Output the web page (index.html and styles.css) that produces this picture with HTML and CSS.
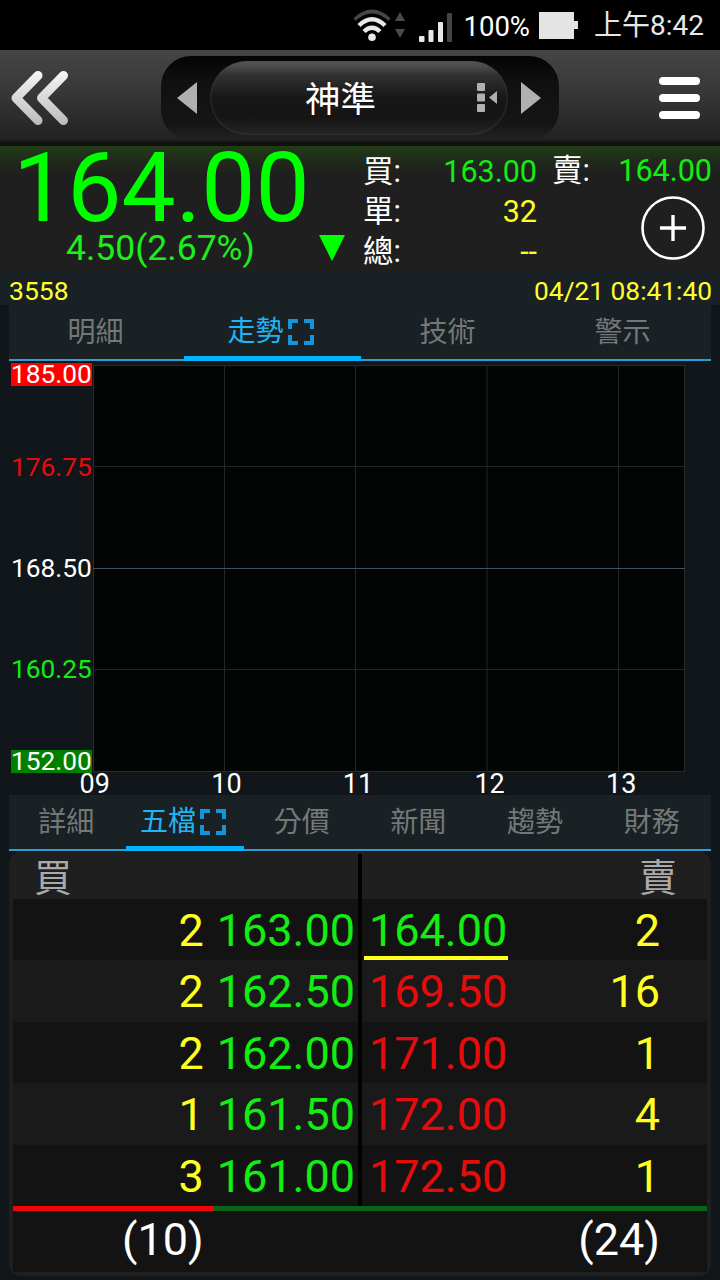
FILE: index.html
```html
<!DOCTYPE html>
<html lang="zh-Hant">
<head>
    <meta charset="UTF-8">
    <meta name="viewport" content="width=device-width, initial-scale=1.0">
    <title>神準 3558</title>
    <link rel="stylesheet" href="styles.css">
</head>
<body>
    <div class="status-bar">
        <svg class="wifi" width="54" height="50" viewBox="0 0 54 50">
            <g fill="none" stroke-linecap="butt">
                <path d="M1.5 19.5 Q19 3.5 36.500 19.500" stroke="#454545" stroke-width="3.600"/>
                <path d="M6 25.500 Q19 13 32 25.500" stroke="#e8e8e8" stroke-width="4.400"/>
                <path d="M11 31.500 Q19 24 27 31.500" stroke="#e8e8e8" stroke-width="4.400"/>
            </g>
            <circle cx="19" cy="37.300" r="3.800" fill="#e8e8e8"/>
            <path d="M42 21 L47 12 L52 21 Z M42 29 H52 L47 38 Z" fill="#4a4a4a"/>
        </svg>
        <svg class="signal" width="34" height="50" viewBox="0 0 34 50">
            <rect x="0" y="36" width="5.500" height="6" rx="1" fill="#e8e8e8"/>
            <rect x="9.500" y="30" width="5" height="12" rx="1" fill="#e8e8e8"/>
            <rect x="19" y="22" width="5" height="20" rx="1" fill="#e8e8e8"/>
            <rect x="28" y="13" width="5" height="29" rx="1" fill="#454545"/>
        </svg>
        <span class="percent">100%</span>
        <svg class="battery" width="39" height="50" viewBox="0 0 39 50">
            <path d="M0 12 H35 V21 H39 V29 H35 V39 H0 Z" fill="#e4e4e4"/>
        </svg>
        <span class="clock">上午8:42</span>
    </div>

    <div class="header">
        <svg class="back" width="62" height="60" viewBox="0 0 62 60">
            <defs>
                <linearGradient id="metal" x1="0" y1="0" x2="0" y2="60" gradientUnits="userSpaceOnUse">
                    <stop offset="0" stop-color="#fafafa"/>
                    <stop offset="1" stop-color="#b8b8b8"/>
                </linearGradient>
            </defs>
            <path d="M30 7.500 L8 30 L30 52.500 M55.500 7.500 L33.500 30 L55.500 52.500" fill="none" stroke="url(#metal)" stroke-width="9" stroke-linecap="round" stroke-linejoin="round"/>
        </svg>
        <div class="selector">
            <svg width="20" height="32" viewBox="0 0 20 32"><path d="M0 16 L20 0 V32 Z" fill="#b0b0b0"/></svg>
            <div class="pill">
                <span class="stock-name">神準</span>
                <svg class="list-icon" width="21" height="30" viewBox="0 0 21 30">
                    <rect width="8" height="8" rx="1" fill="#b0b0b0"/>
                    <rect y="10.500" width="8" height="8" rx="1" fill="#b0b0b0"/>
                    <rect y="21" width="8" height="8" rx="1" fill="#b0b0b0"/>
                    <path d="M12 14.500 L20 8 V21 Z" fill="#b0b0b0"/>
                </svg>
            </div>
            <svg width="20" height="32" viewBox="0 0 20 32"><path d="M0 0 L20 16 L0 32 Z" fill="#b0b0b0"/></svg>
        </div>
        <div class="menu"><i></i><i></i><i></i></div>
    </div>

    <div class="quote">
        <div class="quote-main">
            <div class="price">164.00</div>
            <div class="change">
                <span>4.50(2.67%)</span>
                <svg width="26" height="26" viewBox="0 0 26 26"><path d="M0 0 H26 L13 26 Z" fill="#00ff00"/></svg>
            </div>
        </div>
        <div class="quote-detail">
            <span>買:</span><span class="value green">163.00</span>
            <span>單:</span><span class="value yellow">32</span>
            <span>總:</span><span class="value yellow">--</span>
        </div>
        <div class="quote-ask">
            <div class="ask-line"><span>賣:</span><span class="green">164.00</span></div>
            <svg class="add" width="64" height="64" viewBox="0 0 64 64">
                <circle cx="32" cy="32" r="30.500" fill="none" stroke="#fff" stroke-width="2.600"/>
                <path d="M19 32 H45 M32 19 V45" stroke="#fff" stroke-width="3.400"/>
            </svg>
        </div>
    </div>

    <div class="info">
        <span>3558</span>
        <span class="time">04/21 08:41:40</span>
    </div>

    <div class="tabs">
        <div class="tab">明細</div>
        <div class="tab active">走勢
            <svg width="26" height="26" viewBox="0 0 26 26"><path d="M2 10 V2 H10 M16 2 H24 V10 M24 16 V24 H16 M10 24 H2 V16" fill="none" stroke="#1594d8" stroke-width="4"/></svg>
        </div>
        <div class="tab">技術</div>
        <div class="tab">警示</div>
    </div>

    <div class="chart">
        <div class="scale">
            <span class="limit-up">185.00</span>
            <span class="red">176.75</span>
            <span>168.50</span>
            <span class="green">160.25</span>
            <span class="limit-down">152.00</span>
        </div>
        <svg class="plot" width="592" height="407" viewBox="0 0 592 407">
            <rect x="0.500" y="0.500" width="591" height="406" fill="#030504" stroke="#292b2b"/>
            <path d="M131.500 0 V407 M262.500 0 V407 M394 0 V407 M525.500 0 V407 M0 101.500 H592 M0 304.500 H592" stroke="#252727"/>
            <path d="M0 203.500 H592" stroke="#3f525b"/>
        </svg>
    </div>
    <div class="hours">
        <span>09</span><span>10</span><span>11</span><span>12</span><span>13</span>
    </div>

    <div class="tabs">
        <div class="tab">詳細</div>
        <div class="tab active">五檔
            <svg width="26" height="26" viewBox="0 0 26 26"><path d="M2 10 V2 H10 M16 2 H24 V10 M24 16 V24 H16 M10 24 H2 V16" fill="none" stroke="#1594d8" stroke-width="4"/></svg>
        </div>
        <div class="tab">分價</div>
        <div class="tab">新聞</div>
        <div class="tab">趨勢</div>
        <div class="tab">財務</div>
    </div>

    <div class="depth">
        <div class="depth-head"><span>買</span><span>賣</span></div>
        <div class="depth-body">
            <div class="side bid">
                <div class="row"><span class="qty">2</span><span class="green">163.00</span></div>
                <div class="row"><span class="qty">2</span><span class="green">162.50</span></div>
                <div class="row"><span class="qty">2</span><span class="green">162.00</span></div>
                <div class="row"><span class="qty">1</span><span class="green">161.50</span></div>
                <div class="row"><span class="qty">3</span><span class="green">161.00</span></div>
            </div>
            <div class="side ask">
                <div class="row"><span class="green last">164.00</span><span class="qty">2</span></div>
                <div class="row"><span class="red">169.50</span><span class="qty">16</span></div>
                <div class="row"><span class="red">171.00</span><span class="qty">1</span></div>
                <div class="row"><span class="red">172.00</span><span class="qty">4</span></div>
                <div class="row"><span class="red">172.50</span><span class="qty">1</span></div>
            </div>
        </div>
        <div class="ratio"><div class="ratio-buy" style="width: 29%"></div></div>
        <div class="totals"><span>(10)</span><span>(24)</span></div>
    </div>
</body>
</html>
```
FILE: styles.css
```css
* {
    box-sizing: border-box;
}

body {
    margin: 0;
    width: 720px;
    height: 1280px;
    overflow: hidden;
    background: #10161a;
    color: #fff;
    font-family: Roboto, "Noto Sans CJK TC", sans-serif;
    white-space: nowrap;
}

svg {
    display: block;
    flex: none;
}

.green {
    color: #12ee12;
}

.red {
    color: #e60c0c;
}

.yellow {
    color: #ffff20;
}

/* status bar */
.status-bar {
    display: flex;
    justify-content: flex-end;
    height: 50px;
    padding-right: 16px;
    background: #000;
    color: #e8e8e8;
    font-size: 28px;
    line-height: 52px;
}

.signal {
    margin-left: 12px;
}

.percent {
    margin-left: 10px;
    color: #fff;
    font-size: 27.5px;
    line-height: 54px;
}

.battery {
    margin: 0 16px 0 9px;
}

/* header */
.header {
    display: flex;
    align-items: center;
    justify-content: space-between;
    height: 96px;
    padding: 0 20px 0 8px;
    background: linear-gradient(#454545, #393939 40%, #222 93%, #10100c 97%, #10100c);
}

.selector {
    display: flex;
    align-items: center;
    justify-content: space-between;
    width: 398px;
    height: 84px;
    margin-left: -9px;
    padding: 0 18px 0 16px;
    border-radius: 30px;
    background: linear-gradient(#040404, #101010 30%, #151515 80%, #222);
}

.pill {
    display: flex;
    align-items: center;
    width: 298px;
    height: 74px;
    border-radius: 37px;
    padding: 0 10px 0 95px;
    justify-content: space-between;
    background: linear-gradient(#5a5a5a, #303030 20%, #171717 50%, #151515 75%, #252525);
    box-shadow: inset 0 0 3px #444;
}

.stock-name {
    padding-top: 4px;
    font-size: 35.5px;
    line-height: 74px;
}

.menu {
    display: flex;
    flex-direction: column;
    gap: 9px;
}

.menu i {
    width: 41px;
    height: 8px;
    border-radius: 4px;
    background: #fff;
}

/* quote */
.quote {
    display: flex;
    height: 125px;
    background: linear-gradient(#213c15, #202a1c 12%, #1f1f1f 23%);
}

.quote-main {
    width: 363px;
    color: #00ff00;
}

.price {
    height: 83px;
    padding-left: 13px;
    font-size: 96.5px;
    line-height: 85px;
}

.change {
    display: flex;
    align-items: center;
    justify-content: space-between;
    height: 38px;
    padding: 0 18px 0 66px;
    color: #1cf01c;
    font-size: 35.5px;
    line-height: 38px;
}

.quote-detail {
    display: grid;
    grid-template-columns: 60px 114px;
    grid-template-rows: 40px 40px 40px;
    padding-top: 5px;
    font-size: 30.5px;
    line-height: 41px;
}

.value {
    text-align: right;
}

.quote-ask {
    display: flex;
    flex: 1;
    flex-direction: column;
    padding: 5px 8px 0 15px;
    font-size: 30.5px;
    line-height: 40px;
}

.ask-line {
    display: flex;
    justify-content: space-between;
}

.add {
    align-self: flex-end;
    margin: 5px 7px 0 0;
}

.info {
    display: flex;
    justify-content: space-between;
    height: 34px;
    padding: 0 8px 0 9px;
    background: #1a2124;
    color: #ffff30;
    font-size: 26.5px;
    line-height: 40px;
}

.time {
    font-size: 26.3px;
}

/* tabs */
.tabs {
    display: flex;
    height: 56px;
    margin: 0 9px;
    background: linear-gradient(#2a9fd5, #2a9fd5) bottom / 100% 2px no-repeat #1a2124;
    color: #747878;
    font-size: 28px;
    line-height: 54px;
}

.tab {
    display: flex;
    flex: 1 1 0;
    align-items: center;
    justify-content: center;
    gap: 4px;
    padding: 0 2px 1px 0;
}

.tab.active {
    border-bottom: 5px solid #00b4ff;
    padding: 2px 4px 0 0;
    color: #20b4f5;
}

/* chart */
.chart {
    display: flex;
    height: 412px;
}

.scale {
    display: grid;
    grid-template-rows: 23px 162px 40px 162px 23px;
    align-items: center;
    width: 93px;
    padding: 2px 1px 0 11px;
    font-size: 26.3px;
    line-height: 23px;
}

.limit-up {
    background: #f00;
}

.limit-down {
    background: #008000;
}

.plot {
    margin-top: 4px;
}

.hours {
    display: flex;
    height: 22px;
    padding-left: 29px;
    font-size: 27px;
    line-height: 23px;
}

.hours span {
    width: 131.6px;
    text-align: center;
}

/* five-level depth */
.depth {
    height: 424px;
    margin: 1px 9px 0;
    padding: 0 4px;
    border-radius: 12px;
    background: #1f1f1f;
}

.depth-head {
    display: flex;
    justify-content: space-between;
    height: 47px;
    padding: 0 30px 0 21px;
    background: linear-gradient(#000, #000) 345px 2px / 4px 100% no-repeat;
    color: #aaa;
    font-size: 38px;
    line-height: 53px;
}

.depth-body {
    display: flex;
    gap: 4px;
    height: 307px;
    background: #000;
    font-size: 45px;
    line-height: 63px;
}

.side {
    display: grid;
    flex: 1 1 0;
    grid-template-rows: repeat(5, 61.4px);
}

.row {
    display: flex;
    background: #131313;
}

.row:nth-child(even) {
    background: #1a1a1a;
}

.qty {
    color: #ffff20;
}

.bid .row {
    justify-content: flex-end;
    padding-right: 3px;
    gap: 13px;
}

.ask .row {
    justify-content: space-between;
    padding: 0 47px 0 2px;
}

.ask .row span:first-child {
    width: 144px;
    padding-left: 5px;
}

.ask .last {
    background: linear-gradient(#ffff20, #ffff20) bottom / 100% 4px no-repeat;
}

.ratio {
    height: 5px;
    background: #0a6418;
}

.ratio-buy {
    height: 5px;
    background: #f00505;
}

.totals {
    display: flex;
    justify-content: space-between;
    height: 61px;
    padding: 0 47px 0 109px;
    background: #131313;
    font-size: 45px;
    line-height: 57px;
}
```
